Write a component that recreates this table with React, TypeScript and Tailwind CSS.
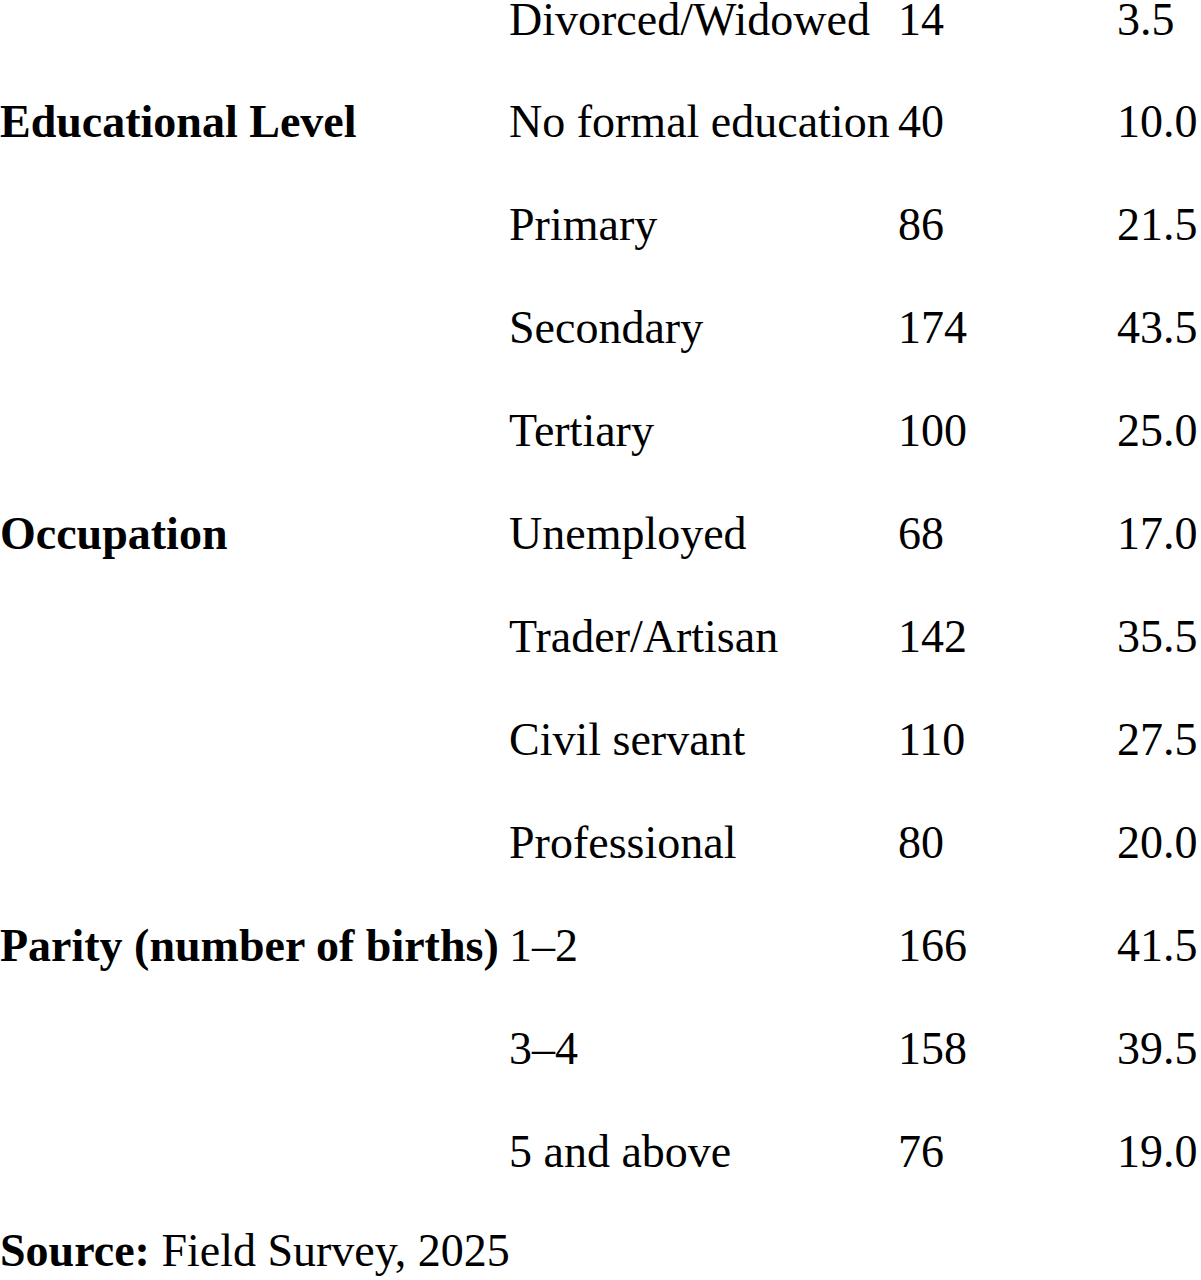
const rows: [string, string, string, string][] = [
  ["", "Divorced/Widowed", "14", "3.5"],
  ["Educational Level", "No formal education", "40", "10.0"],
  ["", "Primary", "86", "21.5"],
  ["", "Secondary", "174", "43.5"],
  ["", "Tertiary", "100", "25.0"],
  ["Occupation", "Unemployed", "68", "17.0"],
  ["", "Trader/Artisan", "142", "35.5"],
  ["", "Civil servant", "110", "27.5"],
  ["", "Professional", "80", "20.0"],
  ["Parity (number of births)", "1–2", "166", "41.5"],
  ["", "3–4", "158", "39.5"],
  ["", "5 and above", "76", "19.0"],
];

export default function App() {
  return (
    <div className="w-[1201px] h-[1280px] overflow-hidden bg-white text-black font-['Liberation_Serif','Times_New_Roman',serif] text-[46px]">
      {rows.map((r, i) => (
        <div
          key={i}
          className={`grid grid-cols-[509px_389px_219px_1fr] whitespace-nowrap ${
            i === 0 ? "h-[70px] leading-[40px]" : "leading-[103px]"
          }`}
        >
          <div className="font-bold">{r[0]}</div>
          <div>{r[1]}</div>
          <div>{r[2]}</div>
          <div>{r[3]}</div>
        </div>
      ))}
      <p className="leading-[96px] whitespace-nowrap">
        <span className="font-bold">Source:</span> Field Survey, 2025
      </p>
    </div>
  );
}
